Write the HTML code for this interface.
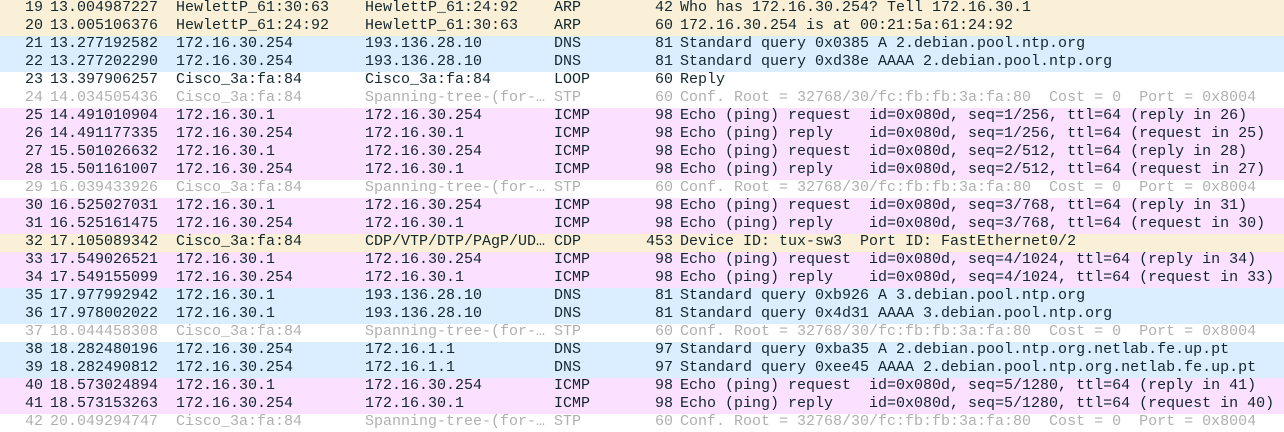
<!DOCTYPE html>
<html><head><style>
body{margin:0;width:1284px;height:421px;overflow:hidden;background:#fff;font-family:"Liberation Mono",monospace;font-size:15px;color:#12272e}
.w{position:absolute;top:0;left:0;width:1284px}
.r{height:18px;line-height:18px;position:relative;white-space:pre}
.r span{position:absolute;top:-1px}
.n{right:1241px;text-align:right}
.t{left:50px}.s{left:176px}.d{left:365px}.p{left:554px}
.l{right:611px;text-align:right}.i{left:680px}
.a{background:#faf0d7}.b{background:#daeeff}.c{background:#fce0ff}.g{color:#b0b0b0}
</style></head><body><div class="w">
<div class="r a"><span class="n">19</span><span class="t">13.004987227</span><span class="s">HewlettP_61:30:63</span><span class="d">HewlettP_61:24:92</span><span class="p">ARP</span><span class="l">42</span><span class="i">Who has 172.16.30.254? Tell 172.16.30.1</span></div>
<div class="r a"><span class="n">20</span><span class="t">13.005106376</span><span class="s">HewlettP_61:24:92</span><span class="d">HewlettP_61:30:63</span><span class="p">ARP</span><span class="l">60</span><span class="i">172.16.30.254 is at 00:21:5a:61:24:92</span></div>
<div class="r b"><span class="n">21</span><span class="t">13.277192582</span><span class="s">172.16.30.254</span><span class="d">193.136.28.10</span><span class="p">DNS</span><span class="l">81</span><span class="i">Standard query 0x0385 A 2.debian.pool.ntp.org</span></div>
<div class="r b"><span class="n">22</span><span class="t">13.277202290</span><span class="s">172.16.30.254</span><span class="d">193.136.28.10</span><span class="p">DNS</span><span class="l">81</span><span class="i">Standard query 0xd38e AAAA 2.debian.pool.ntp.org</span></div>
<div class="r"><span class="n">23</span><span class="t">13.397906257</span><span class="s">Cisco_3a:fa:84</span><span class="d">Cisco_3a:fa:84</span><span class="p">LOOP</span><span class="l">60</span><span class="i">Reply</span></div>
<div class="r g"><span class="n">24</span><span class="t">14.034505436</span><span class="s">Cisco_3a:fa:84</span><span class="d">Spanning-tree-(for-…</span><span class="p">STP</span><span class="l">60</span><span class="i">Conf. Root = 32768/30/fc:fb:fb:3a:fa:80  Cost = 0  Port = 0x8004</span></div>
<div class="r c"><span class="n">25</span><span class="t">14.491010904</span><span class="s">172.16.30.1</span><span class="d">172.16.30.254</span><span class="p">ICMP</span><span class="l">98</span><span class="i">Echo (ping) request  id=0x080d, seq=1/256, ttl=64 (reply in 26)</span></div>
<div class="r c"><span class="n">26</span><span class="t">14.491177335</span><span class="s">172.16.30.254</span><span class="d">172.16.30.1</span><span class="p">ICMP</span><span class="l">98</span><span class="i">Echo (ping) reply    id=0x080d, seq=1/256, ttl=64 (request in 25)</span></div>
<div class="r c"><span class="n">27</span><span class="t">15.501026632</span><span class="s">172.16.30.1</span><span class="d">172.16.30.254</span><span class="p">ICMP</span><span class="l">98</span><span class="i">Echo (ping) request  id=0x080d, seq=2/512, ttl=64 (reply in 28)</span></div>
<div class="r c"><span class="n">28</span><span class="t">15.501161007</span><span class="s">172.16.30.254</span><span class="d">172.16.30.1</span><span class="p">ICMP</span><span class="l">98</span><span class="i">Echo (ping) reply    id=0x080d, seq=2/512, ttl=64 (request in 27)</span></div>
<div class="r g"><span class="n">29</span><span class="t">16.039433926</span><span class="s">Cisco_3a:fa:84</span><span class="d">Spanning-tree-(for-…</span><span class="p">STP</span><span class="l">60</span><span class="i">Conf. Root = 32768/30/fc:fb:fb:3a:fa:80  Cost = 0  Port = 0x8004</span></div>
<div class="r c"><span class="n">30</span><span class="t">16.525027031</span><span class="s">172.16.30.1</span><span class="d">172.16.30.254</span><span class="p">ICMP</span><span class="l">98</span><span class="i">Echo (ping) request  id=0x080d, seq=3/768, ttl=64 (reply in 31)</span></div>
<div class="r c"><span class="n">31</span><span class="t">16.525161475</span><span class="s">172.16.30.254</span><span class="d">172.16.30.1</span><span class="p">ICMP</span><span class="l">98</span><span class="i">Echo (ping) reply    id=0x080d, seq=3/768, ttl=64 (request in 30)</span></div>
<div class="r a"><span class="n">32</span><span class="t">17.105089342</span><span class="s">Cisco_3a:fa:84</span><span class="d">CDP/VTP/DTP/PAgP/UD…</span><span class="p">CDP</span><span class="l">453</span><span class="i">Device ID: tux-sw3  Port ID: FastEthernet0/2</span></div>
<div class="r c"><span class="n">33</span><span class="t">17.549026521</span><span class="s">172.16.30.1</span><span class="d">172.16.30.254</span><span class="p">ICMP</span><span class="l">98</span><span class="i">Echo (ping) request  id=0x080d, seq=4/1024, ttl=64 (reply in 34)</span></div>
<div class="r c"><span class="n">34</span><span class="t">17.549155099</span><span class="s">172.16.30.254</span><span class="d">172.16.30.1</span><span class="p">ICMP</span><span class="l">98</span><span class="i">Echo (ping) reply    id=0x080d, seq=4/1024, ttl=64 (request in 33)</span></div>
<div class="r b"><span class="n">35</span><span class="t">17.977992942</span><span class="s">172.16.30.1</span><span class="d">193.136.28.10</span><span class="p">DNS</span><span class="l">81</span><span class="i">Standard query 0xb926 A 3.debian.pool.ntp.org</span></div>
<div class="r b"><span class="n">36</span><span class="t">17.978002022</span><span class="s">172.16.30.1</span><span class="d">193.136.28.10</span><span class="p">DNS</span><span class="l">81</span><span class="i">Standard query 0x4d31 AAAA 3.debian.pool.ntp.org</span></div>
<div class="r g"><span class="n">37</span><span class="t">18.044458308</span><span class="s">Cisco_3a:fa:84</span><span class="d">Spanning-tree-(for-…</span><span class="p">STP</span><span class="l">60</span><span class="i">Conf. Root = 32768/30/fc:fb:fb:3a:fa:80  Cost = 0  Port = 0x8004</span></div>
<div class="r b"><span class="n">38</span><span class="t">18.282480196</span><span class="s">172.16.30.254</span><span class="d">172.16.1.1</span><span class="p">DNS</span><span class="l">97</span><span class="i">Standard query 0xba35 A 2.debian.pool.ntp.org.netlab.fe.up.pt</span></div>
<div class="r b"><span class="n">39</span><span class="t">18.282490812</span><span class="s">172.16.30.254</span><span class="d">172.16.1.1</span><span class="p">DNS</span><span class="l">97</span><span class="i">Standard query 0xee45 AAAA 2.debian.pool.ntp.org.netlab.fe.up.pt</span></div>
<div class="r c"><span class="n">40</span><span class="t">18.573024894</span><span class="s">172.16.30.1</span><span class="d">172.16.30.254</span><span class="p">ICMP</span><span class="l">98</span><span class="i">Echo (ping) request  id=0x080d, seq=5/1280, ttl=64 (reply in 41)</span></div>
<div class="r c"><span class="n">41</span><span class="t">18.573153263</span><span class="s">172.16.30.254</span><span class="d">172.16.30.1</span><span class="p">ICMP</span><span class="l">98</span><span class="i">Echo (ping) reply    id=0x080d, seq=5/1280, ttl=64 (request in 40)</span></div>
<div class="r g"><span class="n">42</span><span class="t">20.049294747</span><span class="s">Cisco_3a:fa:84</span><span class="d">Spanning-tree-(for-…</span><span class="p">STP</span><span class="l">60</span><span class="i">Conf. Root = 32768/30/fc:fb:fb:3a:fa:80  Cost = 0  Port = 0x8004</span></div>
</div></body></html>
